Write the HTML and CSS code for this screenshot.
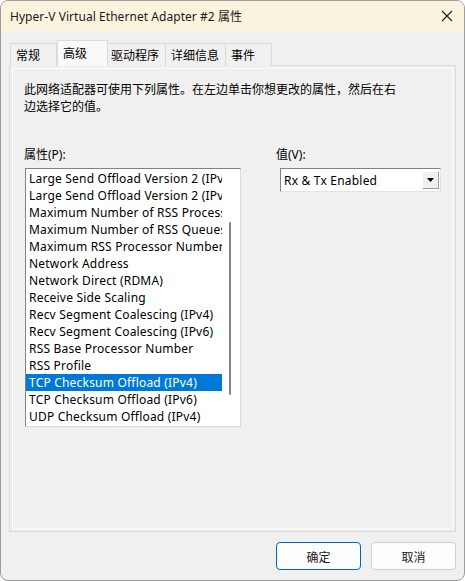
FILE: index.html
```html
<!DOCTYPE html>
<html lang="zh-CN">
<head>
<meta charset="utf-8">
<link rel="stylesheet" href="styles.css">
</head>
<body>
<div class="window">
  <div class="titlebar">
    <span class="title">Hyper-V Virtual Ethernet Adapter #2 属性</span>
    <svg class="close" width="12" height="12" viewBox="0 0 12 12"><path d="M1 1 L11 11 M11 1 L1 11" stroke="#1a1a1a" stroke-width="1.1" fill="none"/></svg>
  </div>
  <div class="body">
    <div class="tabs">
      <div class="tab t1">常规</div>
      <div class="tab t2 active">高级</div>
      <div class="tab t3">驱动程序</div>
      <div class="tab t4">详细信息</div>
      <div class="tab t5">事件</div>
    </div>
    <div class="panel">
      <div class="page">
        <p class="desc">此网络适配器可使用下列属性。在左边单击你想更改的属性，然后在右边选择它的值。</p>
        <div class="cols">
          <div class="col-left">
            <div class="label">属性(P):</div>
            <div class="listbox">
              <ul class="items">
                <li>Large Send Offload Version 2 (IPv4)</li>
                <li>Large Send Offload Version 2 (IPv6)</li>
                <li>Maximum Number of RSS Processors</li>
                <li>Maximum Number of RSS Queues</li>
                <li>Maximum RSS Processor Number</li>
                <li>Network Address</li>
                <li>Network Direct (RDMA)</li>
                <li>Receive Side Scaling</li>
                <li>Recv Segment Coalescing (IPv4)</li>
                <li>Recv Segment Coalescing (IPv6)</li>
                <li>RSS Base Processor Number</li>
                <li>RSS Profile</li>
                <li class="selected">TCP Checksum Offload (IPv4)</li>
                <li>TCP Checksum Offload (IPv6)</li>
                <li>UDP Checksum Offload (IPv4)</li>
              </ul>
              <div class="scrollcol"><div class="thumb"></div></div>
            </div>
          </div>
          <div class="col-right">
            <div class="label">值(V):</div>
            <div class="combo">
              <span class="combo-text">Rx &amp; Tx Enabled</span>
              <span class="combo-btn"><svg width="7" height="4" viewBox="0 0 7 4"><path d="M0 0 H7 L3.5 4 Z" fill="#000"/></svg></span>
            </div>
          </div>
        </div>
      </div>
    </div>
    <div class="buttons">
      <button class="btn primary">确定</button>
      <button class="btn">取消</button>
    </div>
  </div>
</div>
</body>
</html>
```
FILE: styles.css
```css
* { box-sizing: border-box; }
html, body { margin: 0; padding: 0; background: #ffffff; }
body {
  font-family: "Noto Sans", "Noto Sans CJK SC", sans-serif;
  font-size: 12px;
  color: #000;
}
.window {
  width: 465px;
  height: 581px;
  border: 1px solid #9d9d9d;
  border-radius: 8px;
  overflow: hidden;
  background: #f0f0f0;
  display: flex;
  flex-direction: column;
}
.titlebar {
  height: 30px;
  background: #faf4df;
  display: flex;
  align-items: center;
  justify-content: space-between;
  padding: 0 11px 0 9px;
}
.title {
  font-size: 12px;
  color: #1a1a1a;
  letter-spacing: 0.05px;
}
.close { display: block; }
.body {
  flex: 1;
  display: flex;
  flex-direction: column;
  padding: 9px 8px 10px 8px;
}
.tabs {
  display: flex;
  align-items: flex-end;
  padding-left: 1px;
  height: 26px;
  margin-bottom: -1px;
  position: relative;
  z-index: 1;
}
.tab {
  height: 23px;
  border: 1px solid #d9d9d9;
  border-bottom: none;
  padding: 0 0 0 5px;
  display: flex;
  align-items: center;
  background: #f0f0f0;
  font-size: 12px;
  white-space: nowrap;
  flex: none;
}
.tab + .tab { border-left: none; }
.t1 { width: 47px; }
.t2 { width: 51px; }
.t3 { width: 58px; padding-left: 3px; }
.t4 { width: 60px; padding-left: 5px; }
.t5 { width: 46px; padding-left: 5px; }
.tab.active {
  height: 26px;
  background: #f9f9f9;
  align-items: flex-start;
  padding-top: 3px;
  padding-left: 5px;
  border-left: 1px solid #dcdcdc;
  border-color: #dcdcdc;
}
.tab.active + .tab { border-left: none; }
.panel {
  height: 467px;
  border: 1px solid #d9d9d9;
  padding: 2px;
  background: #f0f0f0;
}
.page {
  height: 100%;
  border: 1px solid #fbfbfb;
  padding: 12px 10px 0 11px;
}
.desc {
  margin: 0;
  width: 380px;
  line-height: 17px;
  font-size: 12px;
}
.cols {
  display: flex;
  margin-top: 31px;
}
.col-left { width: 252px; }
.label { line-height: 17px; height: 17px; }
.listbox {
  margin-top: 5px;
  margin-left: 1px;
  width: 216px;
  height: 259px;
  background: #fff;
  border-top: 1px solid #828282;
  border-left: 1px solid #828282;
  border-right: 1px solid #dadada;
  border-bottom: 1px solid #dadada;
  display: flex;
  overflow: hidden;
}
.items {
  list-style: none;
  margin: 0;
  padding: 1px 0 0 0;
  width: 196px;
  flex: none;
  overflow: hidden;
}
.items li {
  height: 17px;
  line-height: 17px;
  padding-left: 3px;
  white-space: nowrap;
  overflow: hidden;
  color: #000;
  letter-spacing: 0.2px;
}
.items li.selected {
  background: #0078d7;
  color: #fff;
}
.scrollcol {
  flex: 1;
  padding-top: 53px;
  padding-left: 7px;
}
.thumb {
  width: 2px;
  height: 173px;
  background: #858585;
  border-radius: 1px;
}
.combo {
  margin-top: 5px;
  margin-left: 4px;
  width: 161px;
  height: 24px;
  background: #fff;
  border-top: 1px solid #828282;
  border-left: 1px solid #828282;
  border-right: 1px solid #e3e3e3;
  border-bottom: 1px solid #e3e3e3;
  display: flex;
  align-items: center;
  justify-content: space-between;
  padding: 0 1px 0 3px;
}
.combo-text { line-height: 17px; letter-spacing: 0.2px; }
.combo-btn {
  width: 17px;
  height: 18px;
  background: #f0f0f0;
  border-top: 1px solid #fff;
  border-left: 1px solid #fff;
  border-right: 1px solid #a0a0a0;
  border-bottom: 1px solid #a0a0a0;
  display: flex;
  align-items: center;
  justify-content: center;
}
.buttons {
  display: flex;
  justify-content: flex-end;
  gap: 10px;
  margin-top: 10px;
}
.btn {
  width: 85px;
  height: 28px;
  font-family: "Noto Sans CJK SC", sans-serif;
  font-size: 12px;
  color: #1a1a1a;
  background: #fdfdfd;
  border: 1px solid #d0d0d0;
  border-radius: 4px;
  padding: 0;
}
.btn.primary {
  border-color: #0067c0;
  background: #fdfdfd;
}
```
